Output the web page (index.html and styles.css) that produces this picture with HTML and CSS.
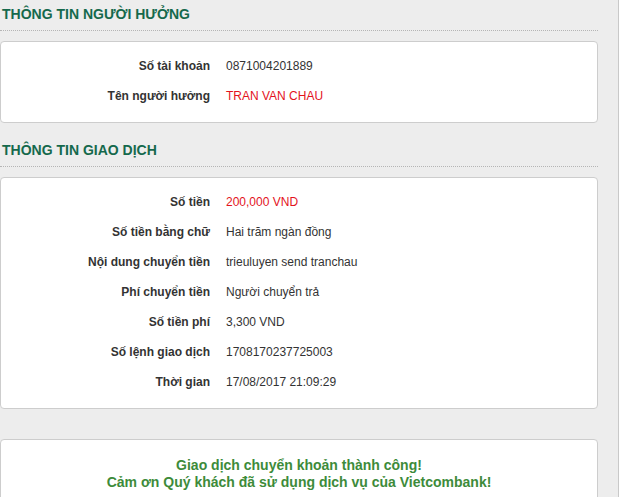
FILE: index.html
```html
<!DOCTYPE html>
<html lang="vi">
<head>
<meta charset="utf-8">
<title>Chuyển khoản</title>
<link rel="stylesheet" href="styles.css">
</head>
<body>
<div class="page">
  <main class="main">
    <h2 class="section-title">THÔNG TIN NGƯỜI HƯỞNG</h2>
    <div class="card">
      <div class="info-grid">
        <div class="label">Số tài khoản</div><div class="value">0871004201889</div>
        <div class="label">Tên người hưởng</div><div class="value red">TRAN VAN CHAU</div>
      </div>
    </div>

    <h2 class="section-title">THÔNG TIN GIAO DỊCH</h2>
    <div class="card">
      <div class="info-grid">
        <div class="label">Số tiền</div><div class="value red">200,000 VND</div>
        <div class="label">Số tiền bằng chữ</div><div class="value">Hai trăm ngàn đồng</div>
        <div class="label">Nội dung chuyển tiền</div><div class="value">trieuluyen send tranchau</div>
        <div class="label">Phí chuyển tiền</div><div class="value">Người chuyển trả</div>
        <div class="label">Số tiền phí</div><div class="value">3,300 VND</div>
        <div class="label">Số lệnh giao dịch</div><div class="value">1708170237725003</div>
        <div class="label">Thời gian</div><div class="value">17/08/2017 21:09:29</div>
      </div>
    </div>

    <div class="card message-card">
      <p class="message">Giao dịch chuyển khoản thành công!<br>Cảm ơn Quý khách đã sử dụng dịch vụ của Vietcombank!</p>
    </div>
  </main>
  <aside class="side"></aside>
</div>
</body>
</html>
```

FILE: styles.css
```css
html, body {
  margin: 0;
  padding: 0;
  height: 100%;
  overflow: hidden;
  background: #ffffff;
  font-family: "Liberation Sans", Arial, sans-serif;
  color: #333333;
}

.page {
  display: flex;
  min-height: 100%;
}

.main {
  width: 598px;
  padding-right: 20px;
  background: #ededed;
  border-right: 1px solid #c9c9c9;
  min-height: 100vh;
}

.side {
  flex: 1;
  background: #ffffff;
}

.section-title {
  margin: 0;
  padding: 6px 2px 8px;
  font-size: 14px;
  line-height: 16px;
  font-weight: bold;
  color: #15694c;
  border-bottom: 1px dotted #b5b5b5;
}

.card + .section-title {
  margin-top: 13px;
}

.card {
  margin-top: 10px;
  background: #ffffff;
  border: 1px solid #cdcdcd;
  border-radius: 4px;
  padding: 9px 0 11px;
}

.info-grid {
  display: grid;
  grid-template-columns: 209px 1fr;
  column-gap: 16px;
  font-size: 12px;
  line-height: 18px;
}

.label,
.value {
  padding: 6px 0;
}

.label {
  text-align: right;
  font-weight: bold;
  color: #333333;
}

.value {
  color: #333333;
}

.value.red {
  color: #e3131d;
}

.message-card {
  margin-top: 30px;
  padding: 17px 0 17px;
}

.message {
  margin: 0;
  text-align: center;
  font-size: 14px;
  line-height: 17px;
  font-weight: bold;
  color: #3d8b3a;
}
```
